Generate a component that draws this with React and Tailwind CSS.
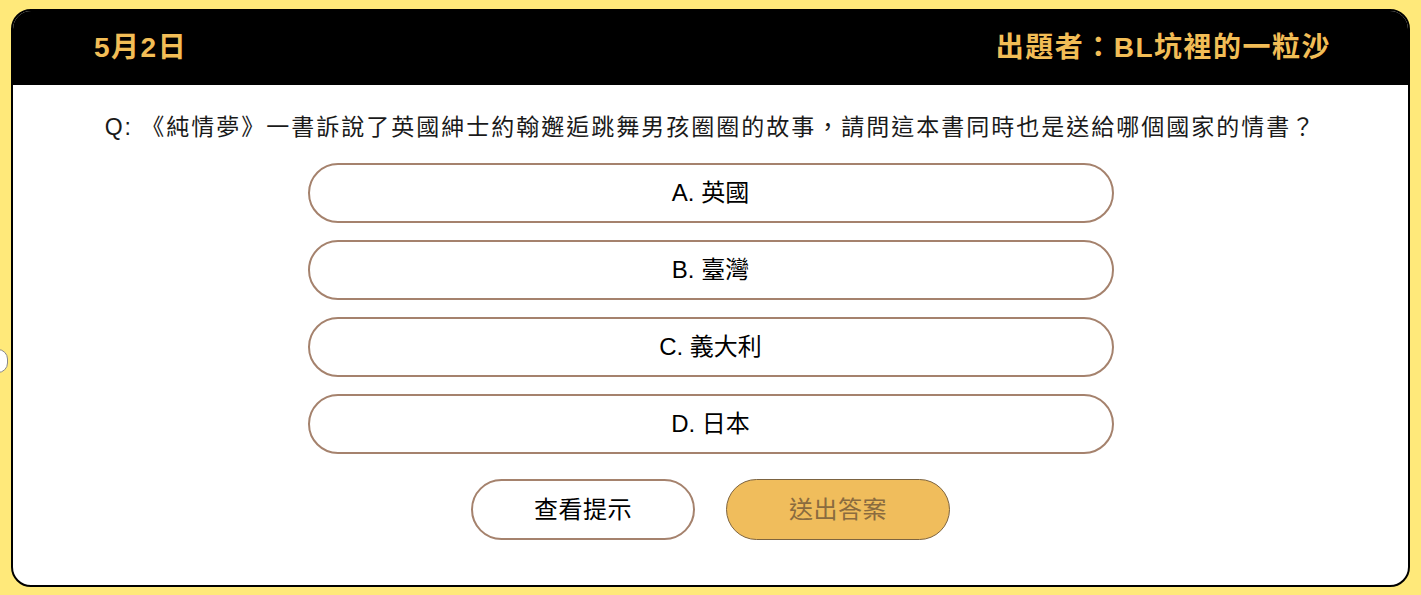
import React from 'react';

const FONT = '"Liberation Sans", "Noto Sans CJK TC", sans-serif';

const options = ['A. 英國', 'B. 臺灣', 'C. 義大利', 'D. 日本'];

export default function App() {
  return (
    <div
      className="relative h-[595px] w-full overflow-hidden bg-[#ffe97a] pt-[9px] pl-[11px] pr-[11px]"
      style={{ fontFamily: FONT }}
    >
      {/* side scroll nub */}
      <div className="absolute left-[-12px] top-[349px] h-[24px] w-[20px] rounded-full border border-[#888] bg-white" />

      <div className="flex h-[578px] flex-col overflow-hidden rounded-[20px] border-2 border-black bg-white">
        {/* Header */}
        <div className="flex h-[74px] shrink-0 items-center justify-between bg-black pl-[81px] pr-[77px] text-[28px] font-bold tracking-[1.5px] text-[#f2bd56]">
          <span>5月2日</span>
          <span>出題者：BL坑裡的一粒沙</span>
        </div>

        {/* Body */}
        <div className="flex flex-col items-center pt-[25px]">
          <p className="text-[23px] leading-[34px] tracking-[2px] text-[#1a1a1a]">
            Q: 《純情夢》一書訴說了英國紳士約翰邂逅跳舞男孩圈圈的故事，請問這本書同時也是送給哪個國家的情書？
          </p>

          <div className="mt-[19px] flex flex-col gap-[17px]">
            {options.map((o) => (
              <button
                key={o}
                type="button"
                className="flex h-[60px] w-[806px] items-center justify-center rounded-full border-2 border-[#a5826d] bg-white text-[24px] text-black"
              >
                {o}
              </button>
            ))}
          </div>

          <div className="mt-[25px] flex gap-[31px]">
            <button
              type="button"
              className="flex h-[61px] w-[224px] items-center justify-center rounded-full border-2 border-[#a5826d] bg-white text-[24px] tracking-[0.5px] text-black"
            >
              查看提示
            </button>
            <button
              type="button"
              className="flex h-[61px] w-[224px] items-center justify-center rounded-full border border-[#7d6440] bg-[#f0bd5c] text-[24px] tracking-[0.5px] text-[#8a6b3f]"
            >
              送出答案
            </button>
          </div>
        </div>
      </div>
    </div>
  );
}
